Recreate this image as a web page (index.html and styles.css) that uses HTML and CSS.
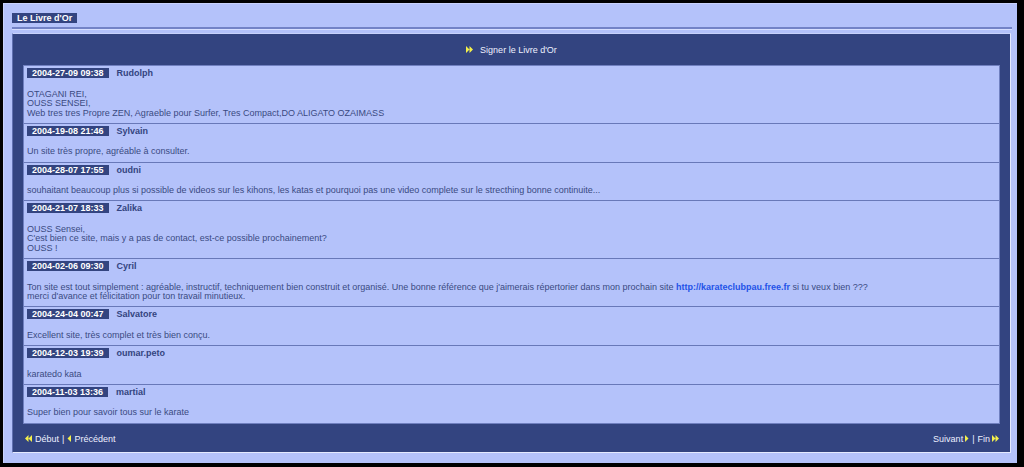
FILE: index.html
```html
<!DOCTYPE html>
<html lang="fr">
<head>
<meta charset="utf-8">
<title>Le Livre d'Or</title>
<link rel="stylesheet" href="styles.css">
</head>
<body>
<div class="page">
  <div class="title-row"><span class="title">Le Livre d'Or</span></div>
  <div class="rule"></div>
  <div class="book">
    <div class="sign">
      <a class="nav-link" href="#">
        <svg class="ico ico-dbl" width="7" height="7" viewBox="0 0 7 7"><path d="M0 0L3.5 3.5L0 7Z M3.5 0L7 3.5L3.5 7Z" fill="#f4f04a"/></svg>
        <span>Signer le Livre d'Or</span>
      </a>
    </div>
    <div class="panel">
      <div class="entry">
        <div class="head"><span class="date">2004-27-09 09:38</span><span class="name">Rudolph</span></div>
        <div class="msg">OTAGANI REI,<br>OUSS SENSEI,<br>Web tres tres Propre ZEN, Agraeble pour Surfer, Tres Compact,DO ALIGATO OZAIMASS</div>
      </div>
      <div class="entry">
        <div class="head"><span class="date">2004-19-08 21:46</span><span class="name">Sylvain</span></div>
        <div class="msg">Un site très propre, agréable à consulter.</div>
      </div>
      <div class="entry">
        <div class="head"><span class="date">2004-28-07 17:55</span><span class="name">oudni</span></div>
        <div class="msg">souhaitant beaucoup plus si possible de videos sur les kihons, les katas et pourquoi pas une video complete sur le strecthing bonne continuite...</div>
      </div>
      <div class="entry">
        <div class="head"><span class="date">2004-21-07 18:33</span><span class="name">Zalika</span></div>
        <div class="msg">OUSS Sensei,<br>C'est bien ce site, mais y a pas de contact, est-ce possible prochainement?<br>OUSS !</div>
      </div>
      <div class="entry">
        <div class="head"><span class="date">2004-02-06 09:30</span><span class="name">Cyril</span></div>
        <div class="msg">Ton site est tout simplement : agréable, instructif, techniquement bien construit et organisé. Une bonne référence que j'aimerais répertorier dans mon prochain site <a class="link" href="#">http://karateclubpau.free.fr</a> si tu veux bien ???<br>merci d'avance et félicitation pour ton travail minutieux.</div>
      </div>
      <div class="entry">
        <div class="head"><span class="date">2004-24-04 00:47</span><span class="name">Salvatore</span></div>
        <div class="msg">Excellent site, très complet et très bien conçu.</div>
      </div>
      <div class="entry">
        <div class="head"><span class="date">2004-12-03 19:39</span><span class="name">oumar.peto</span></div>
        <div class="msg">karatedo kata</div>
      </div>
      <div class="entry">
        <div class="head"><span class="date">2004-11-03 13:36</span><span class="name">martial</span></div>
        <div class="msg">Super bien pour savoir tous sur le karate</div>
      </div>
    </div>
    <div class="footer">
      <div class="pager">
        <a class="nav-link" href="#"><svg class="ico" width="7" height="7" viewBox="0 0 7 7"><path d="M7 0L3.5 3.5L7 7Z M3.5 0L0 3.5L3.5 7Z" fill="#f4f04a"/></svg>Début</a>
        <span class="sep">|</span>
        <a class="nav-link" href="#"><svg class="ico" width="4" height="7" viewBox="0 0 4 7"><path d="M4 0L0.5 3.5L4 7Z" fill="#f4f04a"/></svg>Précédent</a>
      </div>
      <div class="pager">
        <a class="nav-link" href="#">Suivant<svg class="ico ico-after" width="4" height="7" viewBox="0 0 4 7"><path d="M0 0L3.5 3.5L0 7Z" fill="#f4f04a"/></svg></a>
        <span class="sep">|</span>
        <a class="nav-link" href="#">Fin<svg class="ico ico-after" width="7" height="7" viewBox="0 0 7 7"><path d="M0 0L3.5 3.5L0 7Z M3.5 0L7 3.5L3.5 7Z" fill="#f4f04a"/></svg></a>
      </div>
    </div>
  </div>
</div>
</body>
</html>
```
FILE: styles.css
```css
html, body {
  margin: 0;
  padding: 0;
  background: #000;
  height: 467px;
  overflow: hidden;
}

body {
  font-family: "Liberation Sans", Arial, sans-serif;
  font-size: 9px;
  color: #3a4a82;
}

.page {
  margin: 3px 7px 0 3px;
  height: 460px;
  box-sizing: border-box;
  background: #b4c2fa;
  border-left: 1px solid #c8d2fc;
  border-top: 1px solid #c8d2fc;
  padding: 9px 5px 0 8px;
}

.title-row {
  display: flex;
  height: 10px;
}

.title {
  display: block;
  background: #334480;
  color: #fff;
  font-weight: bold;
  line-height: 10px;
  padding: 0 5px;
}

.rule {
  margin-top: 4px;
  border-top: 2px solid #7383c6;
  border-bottom: 1px solid #d6defe;
}

.book {
  margin: 3px 1px 0 0;
  height: 420px;
  box-sizing: border-box;
  background: #334480;
  border: 1px solid;
  border-color: #c8d2fc #e4eaff #e4eaff #6070b0;
  padding: 0 10px;
  display: flex;
  flex-direction: column;
}

.sign {
  height: 31px;
  display: flex;
  align-items: center;
  justify-content: center;
}

.nav-link {
  color: #eef1ff;
  text-decoration: none;
  display: inline-flex;
  align-items: center;
}

.sign .nav-link span {
  margin-left: 4px;
}

.ico {
  display: block;
  margin-right: 3px;
}

.ico-after {
  margin-right: 0;
  margin-left: 2px;
}

.panel {
  background: #b4c2fa;
  border: 1px solid #7080c0;
}

.entry {
  padding: 2px 3px 4.75px 3px;
}

.entry + .entry {
  border-top: 1px solid #6878b8;
}

.head {
  display: flex;
  align-items: center;
  height: 10px;
}

.date {
  background: #334480;
  color: #fff;
  font-weight: bold;
  line-height: 10px;
  padding: 0 5px;
  margin-right: 8px;
}

.name {
  font-weight: bold;
  color: #334480;
}

.msg {
  margin-top: 11.5px;
  line-height: 9.5px;
}

.link {
  color: #2352e8;
  font-weight: bold;
  text-decoration: none;
}

.footer {
  flex: 1;
  display: flex;
  justify-content: space-between;
  align-items: center;
  padding: 2px 1px 0 2px;
}

.pager {
  display: flex;
  align-items: center;
}

.sep {
  color: #eef1ff;
  margin: 0 3px;
}
```
